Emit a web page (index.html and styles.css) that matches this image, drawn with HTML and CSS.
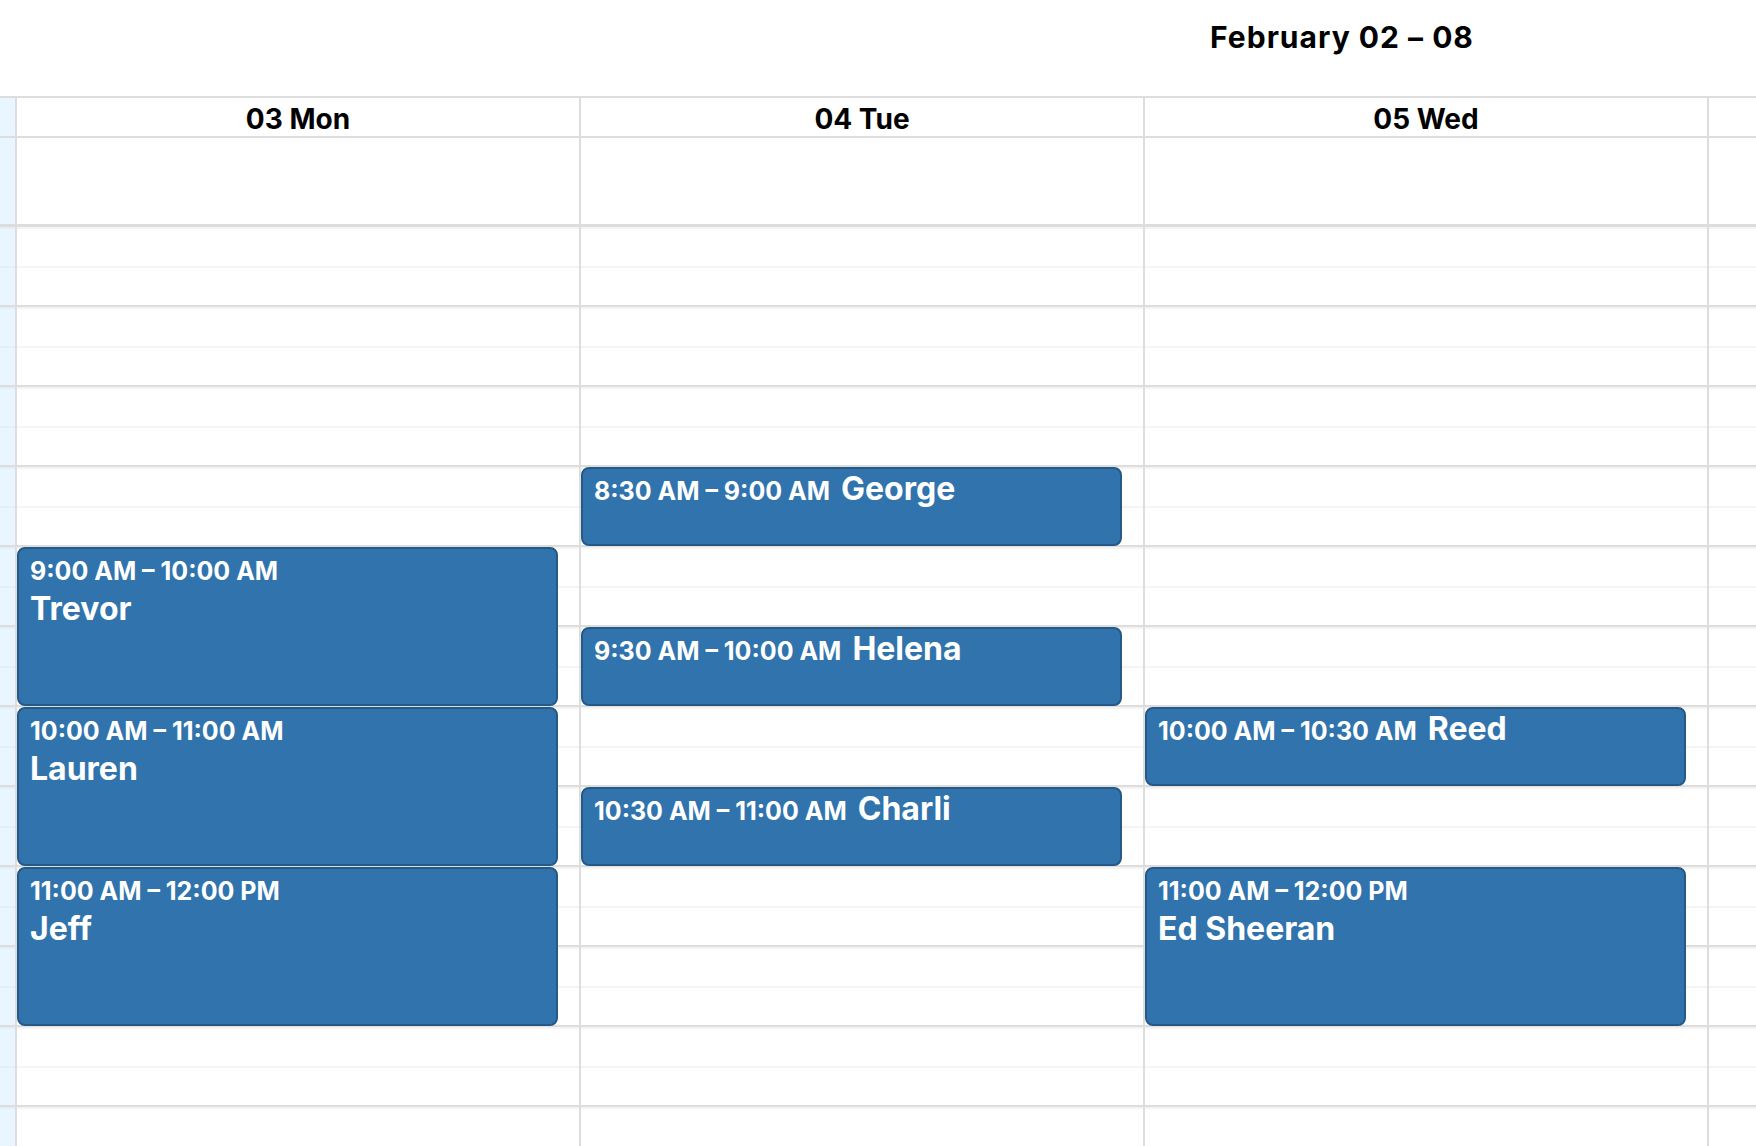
FILE: index.html
```html
<!DOCTYPE html>
<html lang="en">
<head>
<meta charset="utf-8">
<title>Week view</title>
<link rel="stylesheet" href="styles.css">
</head>
<body>
<div class="toolbar"><span class="toolbar-label">February 02 – 08</span></div>
<div class="calendar">
  <div class="row header-row">
    <div class="cell today"></div>
    <div class="cell day-head">03 Mon</div>
    <div class="cell day-head">04 Tue</div>
    <div class="cell day-head">05 Wed</div>
    <div class="cell day-head"></div>
  </div>
  <div class="row allday-row">
    <div class="cell today"></div>
    <div class="cell"></div>
    <div class="cell"></div>
    <div class="cell"></div>
    <div class="cell"></div>
  </div>
  <div class="row time-row">
    <div class="cell today day-col">
      <div class="group"><div class="slot"></div><div class="slot"></div></div>
      <div class="group"><div class="slot"></div><div class="slot"></div></div>
      <div class="group"><div class="slot"></div><div class="slot"></div></div>
      <div class="group"><div class="slot"></div><div class="slot"></div></div>
      <div class="group"><div class="slot"></div><div class="slot"></div></div>
      <div class="group"><div class="slot"></div><div class="slot"></div></div>
      <div class="group"><div class="slot"></div><div class="slot"></div></div>
      <div class="group"><div class="slot"></div><div class="slot"></div></div>
      <div class="group"><div class="slot"></div><div class="slot"></div></div>
      <div class="group"><div class="slot"></div><div class="slot"></div></div>
      <div class="group"><div class="slot"></div><div class="slot"></div></div>
      <div class="group"><div class="slot"></div><div class="slot"></div></div>
    </div>
    <div class="cell day-col">
      <div class="group"><div class="slot"></div><div class="slot"></div></div>
      <div class="group"><div class="slot"></div><div class="slot"></div></div>
      <div class="group"><div class="slot"></div><div class="slot"></div></div>
      <div class="group"><div class="slot"></div><div class="slot"></div></div>
      <div class="group"><div class="slot"></div><div class="slot"></div></div>
      <div class="group"><div class="slot"></div><div class="slot"></div></div>
      <div class="group"><div class="slot"></div><div class="slot"></div></div>
      <div class="group"><div class="slot"></div><div class="slot"></div></div>
      <div class="group"><div class="slot"></div><div class="slot"></div></div>
      <div class="group"><div class="slot"></div><div class="slot"></div></div>
      <div class="group"><div class="slot"></div><div class="slot"></div></div>
      <div class="group"><div class="slot"></div><div class="slot"></div></div>
      <div class="event long" style="top:320px;height:159px"><div class="ev-label">9:00 AM – 10:00 AM</div><div class="ev-title">Trevor</div></div>
      <div class="event long" style="top:480px;height:159px"><div class="ev-label">10:00 AM – 11:00 AM</div><div class="ev-title">Lauren</div></div>
      <div class="event long" style="top:640px;height:159px"><div class="ev-label">11:00 AM – 12:00 PM</div><div class="ev-title">Jeff</div></div>
    </div>
    <div class="cell day-col">
      <div class="group"><div class="slot"></div><div class="slot"></div></div>
      <div class="group"><div class="slot"></div><div class="slot"></div></div>
      <div class="group"><div class="slot"></div><div class="slot"></div></div>
      <div class="group"><div class="slot"></div><div class="slot"></div></div>
      <div class="group"><div class="slot"></div><div class="slot"></div></div>
      <div class="group"><div class="slot"></div><div class="slot"></div></div>
      <div class="group"><div class="slot"></div><div class="slot"></div></div>
      <div class="group"><div class="slot"></div><div class="slot"></div></div>
      <div class="group"><div class="slot"></div><div class="slot"></div></div>
      <div class="group"><div class="slot"></div><div class="slot"></div></div>
      <div class="group"><div class="slot"></div><div class="slot"></div></div>
      <div class="group"><div class="slot"></div><div class="slot"></div></div>
      <div class="event short" style="top:240px;height:79px"><span class="ev-label">8:30 AM – 9:00 AM</span><span class="ev-title">George</span></div>
      <div class="event short" style="top:400px;height:79px"><span class="ev-label">9:30 AM – 10:00 AM</span><span class="ev-title">Helena</span></div>
      <div class="event short" style="top:560px;height:79px"><span class="ev-label">10:30 AM – 11:00 AM</span><span class="ev-title">Charli</span></div>
    </div>
    <div class="cell day-col">
      <div class="group"><div class="slot"></div><div class="slot"></div></div>
      <div class="group"><div class="slot"></div><div class="slot"></div></div>
      <div class="group"><div class="slot"></div><div class="slot"></div></div>
      <div class="group"><div class="slot"></div><div class="slot"></div></div>
      <div class="group"><div class="slot"></div><div class="slot"></div></div>
      <div class="group"><div class="slot"></div><div class="slot"></div></div>
      <div class="group"><div class="slot"></div><div class="slot"></div></div>
      <div class="group"><div class="slot"></div><div class="slot"></div></div>
      <div class="group"><div class="slot"></div><div class="slot"></div></div>
      <div class="group"><div class="slot"></div><div class="slot"></div></div>
      <div class="group"><div class="slot"></div><div class="slot"></div></div>
      <div class="group"><div class="slot"></div><div class="slot"></div></div>
      <div class="event short" style="top:480px;height:79px"><span class="ev-label">10:00 AM – 10:30 AM</span><span class="ev-title">Reed</span></div>
      <div class="event long" style="top:640px;height:159px"><div class="ev-label">11:00 AM – 12:00 PM</div><div class="ev-title">Ed Sheeran</div></div>
    </div>
    <div class="cell day-col">
      <div class="group"><div class="slot"></div><div class="slot"></div></div>
      <div class="group"><div class="slot"></div><div class="slot"></div></div>
      <div class="group"><div class="slot"></div><div class="slot"></div></div>
      <div class="group"><div class="slot"></div><div class="slot"></div></div>
      <div class="group"><div class="slot"></div><div class="slot"></div></div>
      <div class="group"><div class="slot"></div><div class="slot"></div></div>
      <div class="group"><div class="slot"></div><div class="slot"></div></div>
      <div class="group"><div class="slot"></div><div class="slot"></div></div>
      <div class="group"><div class="slot"></div><div class="slot"></div></div>
      <div class="group"><div class="slot"></div><div class="slot"></div></div>
      <div class="group"><div class="slot"></div><div class="slot"></div></div>
      <div class="group"><div class="slot"></div><div class="slot"></div></div>
    </div>
  </div>
</div>
</body>
</html>
```
FILE: styles.css
```css
html, body {
  margin: 0;
  padding: 0;
  background: #fff;
  overflow: hidden;
}
body {
  width: 1756px;
  height: 1146px;
  font-family: Inter, "Liberation Sans", sans-serif;
  color: #000;
}
.toolbar {
  height: 96px;
  box-sizing: border-box;
  display: flex;
  justify-content: center;
  align-items: flex-start;
  padding-left: 928px;
  padding-top: 19px;
}
.toolbar-label {
  font-size: 30px;
  font-weight: 650;
  line-height: 1.2;
  letter-spacing: 1px;
  white-space: nowrap;
}
.calendar {
  width: 2271px;
}
.row {
  display: grid;
  grid-template-columns: 15px 564px 564px 564px 564px;
}
.cell {
  box-sizing: border-box;
  border-left: 2px solid #dddddd;
}
.cell.today {
  border-left: none;
  background: #eaf6ff;
}
.header-row {
  border-top: 2px solid #dddddd;
  border-bottom: 2px solid #dddddd;
  height: 42px;
  box-sizing: border-box;
}
.day-head {
  display: flex;
  align-items: center;
  justify-content: center;
  padding-top: 4px;
  font-size: 28px;
  font-weight: 650;
  white-space: nowrap;
}
.allday-row {
  height: 89px;
  box-sizing: border-box;
  border-bottom: 3px solid #dddddd;
}
.day-col {
  position: relative;
}
.group {
  height: 80px;
  box-sizing: border-box;
  border-bottom: 2px solid #dddddd;
  display: flex;
  flex-direction: column;
}
.slot {
  flex: 1;
  border-top: 2px solid #f4f4f4;
}
.today .slot {
  border-top-color: #e3eff8;
}
.event {
  position: absolute;
  left: 0;
  right: 21px;
  box-sizing: border-box;
  background: #3174ad;
  border: 2px solid #265985;
  border-radius: 8px;
  color: #fff;
  padding: 7px 11px;
  overflow: hidden;
}
.event.short {
  display: flex;
  align-items: flex-start;
}
.ev-label {
  font-size: 25px;
  font-weight: 650;
  line-height: 30px;
  white-space: nowrap;
}
.event.short .ev-label {
  margin-right: 11px;
}
.ev-title {
  font-size: 32px;
  font-weight: 650;
  line-height: 1.3;
  white-space: nowrap;
}
.event.long .ev-title {
  margin-top: 2px;
}
.event.short .ev-title {
  line-height: 32px;
  margin-top: -3px;
}
```
